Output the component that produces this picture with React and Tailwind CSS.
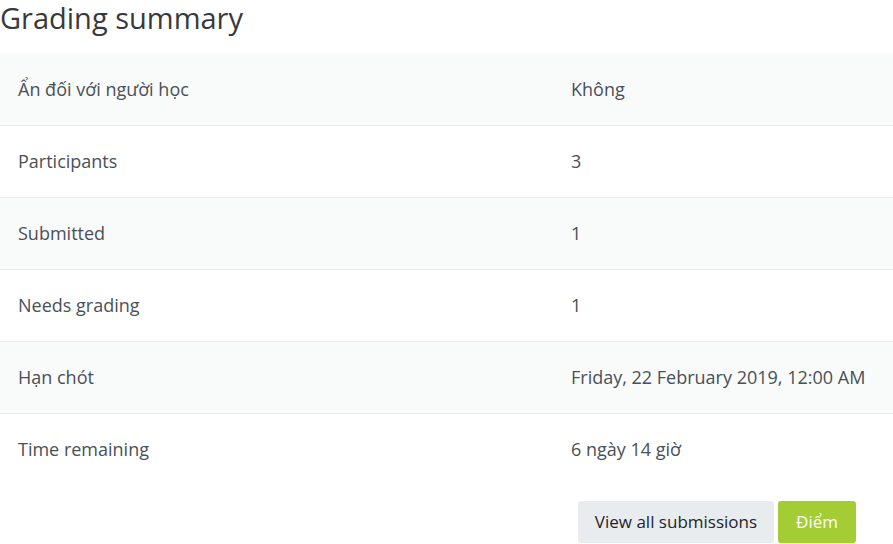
import React from 'react';

const rows = [
  ['Ẩn đối với người học', 'Không'],
  ['Participants', '3'],
  ['Submitted', '1'],
  ['Needs grading', '1'],
  ['Hạn chót', 'Friday, 22 February 2019, 12:00 AM'],
  ['Time remaining', '6 ngày 14 giờ'],
];

const App = () => {
  return (
    <div
      className="w-[893px] h-[544px] overflow-hidden bg-white text-[#373a3c]"
      style={{ fontFamily: '"Open Sans", "Noto Sans", sans-serif' }}
    >
      <h2 className="text-[29px] leading-[36px] mb-[17px]">Grading summary</h2>
      <div>
        {rows.map(([label, value], i) => (
          <div
            key={label}
            className={`grid grid-cols-[571px_1fr] items-center h-[72px] text-[18px] text-[#495057] ${
              i > 0 ? 'border-t border-[#e9ecef]' : ''
            } ${i % 2 === 0 ? 'bg-[#f9fafa]' : 'bg-white'}`}
          >
            <div className="pl-[18px]">{label}</div>
            <div>{value}</div>
          </div>
        ))}
      </div>
      <div className="flex justify-end gap-1 pr-[37px] pt-4">
        <button className="h-[42px] px-[17px] rounded-[3px] bg-[#e9ecef] text-[#212529] text-[17px]">
          View all submissions
        </button>
        <button className="h-[42px] px-[18px] rounded-[3px] bg-[#a3cc35] text-white text-[17px]">
          Điểm
        </button>
      </div>
    </div>
  );
};

export default App;
